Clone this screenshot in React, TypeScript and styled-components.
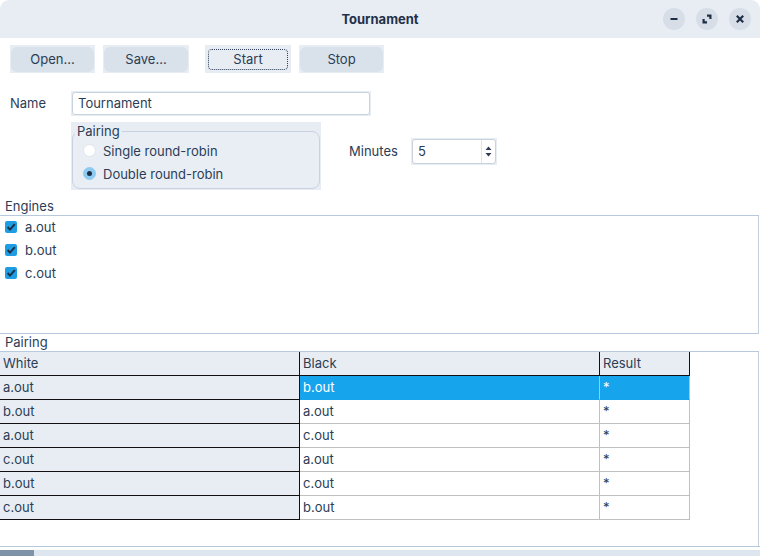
import React from "react";
import styled, { createGlobalStyle } from "styled-components";

const Global = createGlobalStyle`
  html, body { margin: 0; padding: 0; background: #ffffff; }
  body { font-family: Inter, "Noto Sans", "Liberation Sans", sans-serif; font-size: 13px; color: #2b3d55; }
  * { box-sizing: border-box; }
`;

const Window = styled.div`
  width: 760px;
  height: 556px;
  display: flex;
  flex-direction: column;
  background: #ffffff;
  border-radius: 9px 9px 0 0;
  overflow: hidden;
`;

const TitleBar = styled.div`
  height: 38px;
  flex: 0 0 38px;
  background: #e8edf4;
  display: grid;
  grid-template-columns: 1fr auto 1fr;
  align-items: center;
  padding-right: 9px;
`;

const Title = styled.div`
  grid-column: 2;
  font-weight: 700;
  font-size: 13px;
  color: #1f3049;
  padding-left: 9px;
`;

const Controls = styled.div`
  grid-column: 3;
  justify-self: end;
  display: flex;
  gap: 11px;
`;

const CtrlBtn = styled.div`
  width: 22px;
  height: 22px;
  border-radius: 50%;
  background: #d7dee8;
  display: flex;
  align-items: center;
  justify-content: center;
`;

const Toolbar = styled.div`
  display: flex;
  padding: 7px 0 0 10px;
`;

const BtnFrame = styled.div<{ $ml: number; $w: number }>`
  margin-left: ${(p) => p.$ml}px;
  width: ${(p) => p.$w}px;
  height: 28px;
  background: #e8edf4;
  padding: 2px 1px 1px 1px;
`;

const Button = styled.div<{ $focus?: boolean }>`
  width: 100%;
  height: 100%;
  border-radius: 6px;
  background: ${(p) => (p.$focus ? "#e8edf4" : "#d9e1ea")};
  display: flex;
  align-items: center;
  justify-content: center;
  padding-bottom: 2px;
  font-size: 13px;
  color: #2b3d55;
  outline: ${(p) => (p.$focus ? "1px dotted #2f4058" : "none")};
  outline-offset: -3px;
`;

const NameRow = styled.div`
  display: flex;
  align-items: center;
  margin-top: 18px;
  padding-left: 10px;
`;

const Label = styled.div<{ $w: number }>`
  width: ${(p) => p.$w}px;
  font-size: 13px;
  color: #2b3d55;
  padding-bottom: 2px;
`;

const TextInput = styled.div`
  width: 300px;
  height: 25px;
  background: #e8edf4;
  padding: 1px;
`;

const Field = styled.div`
  height: 100%;
  background: #ffffff;
  border: 1px solid #c9d3df;
  border-radius: 3px;
  display: flex;
  align-items: center;
  padding: 0 0 1px 5px;
`;

const OptionsRow = styled.div`
  display: flex;
  margin-top: 6px;
  padding-left: 71px;
`;

const GroupWrap = styled.div`
  width: 250px;
  height: 68px;
  background: #e8edf4;
  padding: 1px 1px 1px 1px;
`;

const Group = styled.fieldset`
  margin: 0;
  height: 100%;
  border: 1px solid #c8d2df;
  border-radius: 8px;
  padding: 0 0 0 10px;
  background: #e9eef5;
`;

const Legend = styled.legend`
  padding: 0 2px 0 2px;
  margin-left: -8px;
  line-height: 16px;
  font-size: 13px;
  color: #2b3d55;
`;

const RadioRow = styled.div`
  display: flex;
  align-items: center;
  height: 23px;
  gap: 7px;
`;

const Radio = styled.div<{ $on?: boolean }>`
  width: 13px;
  height: 13px;
  border-radius: 50%;
  background: ${(p) => (p.$on ? "#8ecbf1" : "#ffffff")};
  border: 1px solid ${(p) => (p.$on ? "#8ecbf1" : "#dfe5ec")};
  display: flex;
  align-items: center;
  justify-content: center;
  &::after {
    content: "";
    display: ${(p) => (p.$on ? "block" : "none")};
    width: 5px;
    height: 5px;
    border-radius: 50%;
    background: #1d2f47;
  }
`;

const MinutesBox = styled.div`
  display: flex;
  align-items: center;
  margin-left: 28px;
  margin-top: 16px;
  height: 27px;
`;

const Spin = styled.div`
  width: 86px;
  height: 27px;
  background: #e8edf4;
  padding: 1px;
`;

const SpinField = styled.div`
  height: 100%;
  background: #ffffff;
  border: 1px solid #c9d3df;
  border-radius: 3px;
  display: flex;
  align-items: stretch;
`;

const SpinValue = styled.div`
  flex: 1;
  display: flex;
  align-items: center;
  padding: 0 0 1px 5px;
`;

const SpinArrows = styled.div`
  width: 14px;
  border-left: 1px solid #dfe5ec;
  display: flex;
  flex-direction: column;
  align-items: center;
  justify-content: center;
  gap: 3px;
`;

const SectionLabel = styled.div<{ $mt: number }>`
  margin-top: ${(p) => p.$mt}px;
  height: 17px;
  line-height: 16px;
  padding-left: 5px;
  font-size: 13px;
  color: #2b3d55;
`;

const EngineBox = styled.div`
  width: 759px;
  height: 119px;
  border-top: 1px solid #b7c9dc;
  border-bottom: 1px solid #b7c9dc;
  border-right: 1px solid #c3cfdb;
`;

const EngineRow = styled.div`
  height: 23px;
  display: flex;
  align-items: center;
  padding: 0 0 1px 5px;
  gap: 8px;
`;

const Check = styled.div`
  width: 12px;
  height: 12px;
  border-radius: 2px;
  background: #1e9de2;
  display: flex;
  align-items: center;
  justify-content: center;
`;

const TablePane = styled.div`
  width: 759px;
  flex: 1;
  border-top: 1px solid #b7c9dc;
  border-right: 1px solid #c3cfdb;
`;

const TRow = styled.div`
  display: grid;
  grid-template-columns: 300px 300px 90px;
`;

const Cell = styled.div<{ $kind: "head" | "side" | "plain" | "sel" }>`
  height: 24px;
  display: flex;
  align-items: center;
  padding: 0 0 1px 3px;
  font-size: 13px;
  background: ${(p) =>
    p.$kind === "sel" ? "#16a5ec" : p.$kind === "plain" ? "#ffffff" : "#e8edf4"};
  color: ${(p) => (p.$kind === "sel" ? "#ffffff" : "#2b3d55")};
  border-right: 1px solid
    ${(p) => (p.$kind === "head" || p.$kind === "side" ? "#111111" : p.$kind === "sel" ? "#8fd0f3" : "#c0c0c0")};
  border-bottom: 1px solid
    ${(p) => (p.$kind === "head" || p.$kind === "side" ? "#111111" : p.$kind === "sel" ? "#16a5ec" : "#c0c0c0")};
`;

const ScrollArea = styled.div`
  flex: 0 0 10px;
  border-top: 1px solid #b4c9dd;
  padding-top: 3px;
  display: flex;
`;

const Track = styled.div`
  flex: 1;
  height: 6px;
  background: #dde5ef;
  display: flex;
`;

const Thumb = styled.div`
  width: 34px;
  background: #7e92a8;
`;

const CheckIcon = () => (
  <svg width="10" height="10" viewBox="0 0 10 10">
    <path d="M1.6 5 L4 7.6 L8.8 2.2" fill="none" stroke="#1d2f47" strokeWidth="2" />
  </svg>
);

const engines = ["a.out", "b.out", "c.out"];
const pairs: [string, string, string][] = [
  ["a.out", "b.out", "*"],
  ["b.out", "a.out", "*"],
  ["a.out", "c.out", "*"],
  ["c.out", "a.out", "*"],
  ["b.out", "c.out", "*"],
  ["c.out", "b.out", "*"],
];

export default function App() {
  return (
    <>
      <Global />
      <Window>
        <TitleBar>
          <Title>Tournament</Title>
          <Controls>
            <CtrlBtn>
              <svg width="10" height="10" viewBox="0 0 10 10">
                <path d="M1.5 5 H8.5" stroke="#1d2f47" strokeWidth="2.2" />
              </svg>
            </CtrlBtn>
            <CtrlBtn>
              <svg width="10" height="10" viewBox="0 0 10 10">
                <path d="M5 1.6 H8.4 V5" fill="none" stroke="#1d2f47" strokeWidth="2.2" />
                <path d="M1.6 5 V8.4 H5" fill="none" stroke="#1d2f47" strokeWidth="2.2" />
              </svg>
            </CtrlBtn>
            <CtrlBtn>
              <svg width="10" height="10" viewBox="0 0 10 10">
                <path d="M1.8 1.8 L8.2 8.2 M8.2 1.8 L1.8 8.2" stroke="#1d2f47" strokeWidth="2.2" />
              </svg>
            </CtrlBtn>
          </Controls>
        </TitleBar>

        <Toolbar>
          <BtnFrame $ml={0} $w={85}>
            <Button>Open...</Button>
          </BtnFrame>
          <BtnFrame $ml={8} $w={86}>
            <Button>Save...</Button>
          </BtnFrame>
          <BtnFrame $ml={16} $w={86}>
            <Button $focus>Start</Button>
          </BtnFrame>
          <BtnFrame $ml={8} $w={85}>
            <Button>Stop</Button>
          </BtnFrame>
        </Toolbar>

        <NameRow>
          <Label $w={61}>Name</Label>
          <TextInput>
            <Field>Tournament</Field>
          </TextInput>
        </NameRow>

        <OptionsRow>
          <GroupWrap>
            <Group>
              <Legend>Pairing</Legend>
              <RadioRow>
                <Radio />
                <span>Single round-robin</span>
              </RadioRow>
              <RadioRow>
                <Radio $on />
                <span>Double round-robin</span>
              </RadioRow>
            </Group>
          </GroupWrap>
          <MinutesBox>
            <Label $w={62}>Minutes</Label>
            <Spin>
              <SpinField>
                <SpinValue>5</SpinValue>
                <SpinArrows>
                  <svg width="7" height="4" viewBox="0 0 7 4">
                    <path d="M0.5 4 L3.5 0.5 L6.5 4 Z" fill="#2b3d55" />
                  </svg>
                  <svg width="7" height="4" viewBox="0 0 7 4">
                    <path d="M0.5 0 L3.5 3.5 L6.5 0 Z" fill="#2b3d55" />
                  </svg>
                </SpinArrows>
              </SpinField>
            </Spin>
          </MinutesBox>
        </OptionsRow>

        <SectionLabel $mt={8}>Engines</SectionLabel>
        <EngineBox>
          {engines.map((e) => (
            <EngineRow key={e}>
              <Check>
                <CheckIcon />
              </Check>
              <span>{e}</span>
            </EngineRow>
          ))}
        </EngineBox>

        <SectionLabel $mt={0}>Pairing</SectionLabel>
        <TablePane>
          <TRow>
            <Cell $kind="head">White</Cell>
            <Cell $kind="head">Black</Cell>
            <Cell $kind="head">Result</Cell>
          </TRow>
          {pairs.map((p, i) => (
            <TRow key={i}>
              <Cell $kind="side">{p[0]}</Cell>
              <Cell $kind={i === 0 ? "sel" : "plain"}>{p[1]}</Cell>
              <Cell $kind={i === 0 ? "sel" : "plain"}>{p[2]}</Cell>
            </TRow>
          ))}
        </TablePane>
        <ScrollArea>
          <Track>
            <Thumb />
          </Track>
        </ScrollArea>
      </Window>
    </>
  );
}
